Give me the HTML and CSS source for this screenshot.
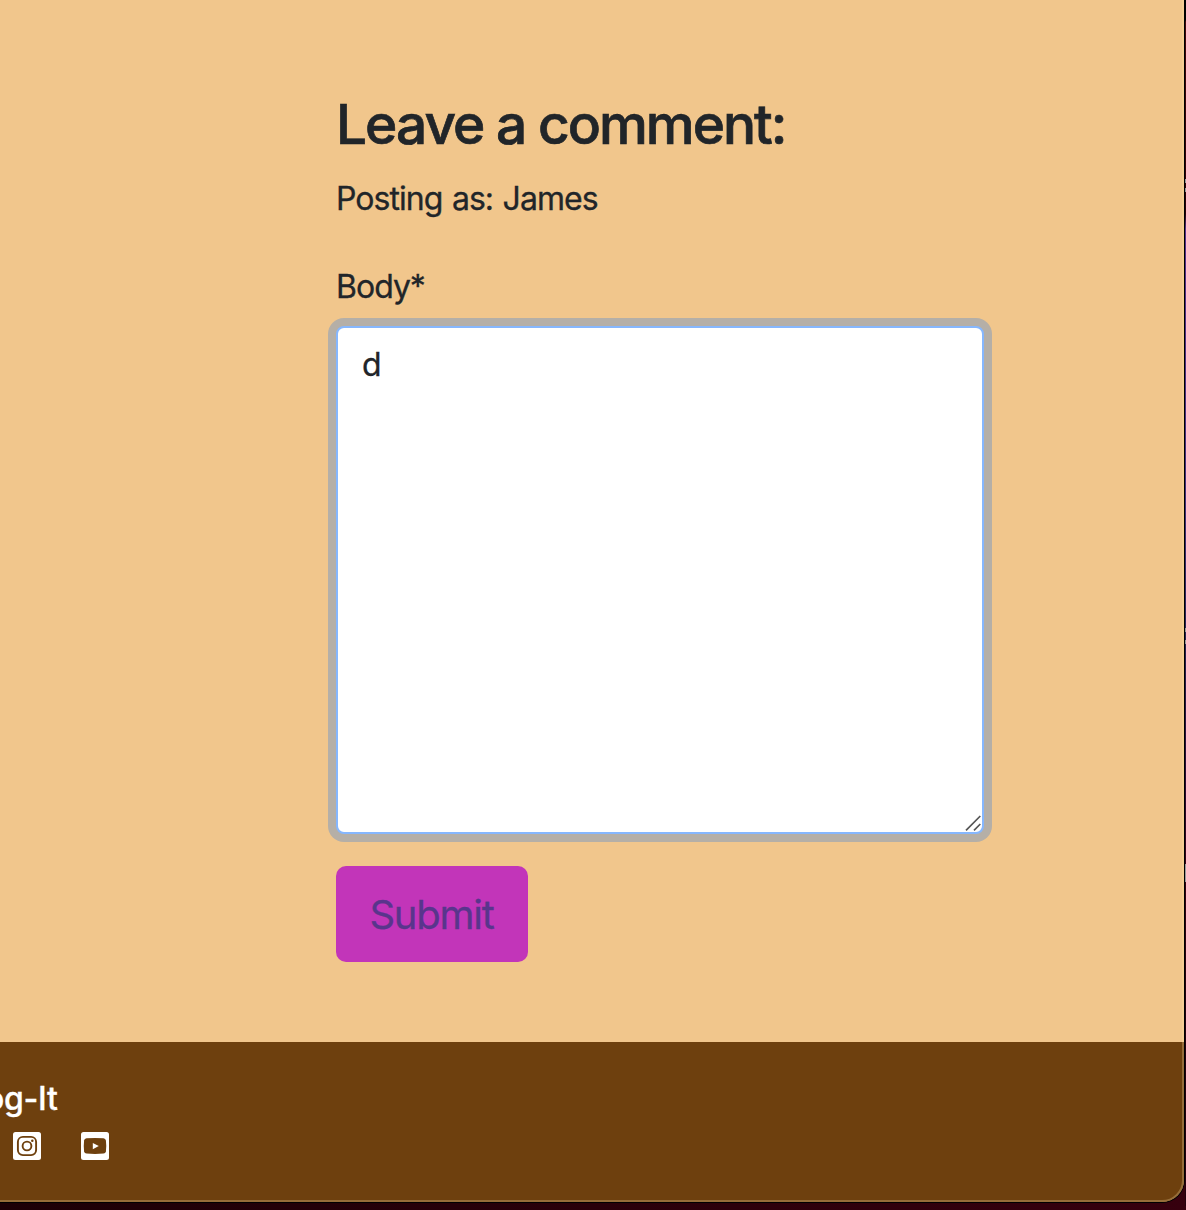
FILE: index.html
```html
<!DOCTYPE html>
<html lang="en">
<head>
<meta charset="utf-8">
<title>Blog-It</title>
<link rel="stylesheet" href="styles.css">
</head>
<body>
<div class="window">
  <main class="comments">
    <h3 class="heading">Leave a comment:</h3>
    <p class="author">Posting as: James</p>
    <form class="comment-form">
      <label class="label" for="body">Body*</label>
      <div class="field">
        <textarea class="textarea" id="body">d</textarea>
        <svg class="grip" viewBox="0 0 16 16" fill="none" stroke="#555" stroke-width="1.7"><path d="M1 15.300 15.300 1M9 15.300 15.300 9"/></svg>
      </div>
      <button class="submit" type="button">Submit</button>
    </form>
  </main>
  <footer class="footer">
    <div class="brand">Blog-It</div>
    <div class="social">
      <svg class="icon" viewBox="0 0 28 28"><rect width="28" height="28" rx="2.500" fill="#fff"/><g fill="none" stroke="#6e400e" stroke-width="1.9"><rect x="4.900" y="4.900" width="18.200" height="18.200" rx="5"/><circle cx="14" cy="14" r="4.400"/></g><circle cx="19.300" cy="8.700" r="1.250" fill="#6e400e"/></svg>
      <svg class="icon" viewBox="0 0 28 28"><rect width="28" height="28" rx="2.500" fill="#fff"/><path d="M5.500 6.300Q14 5.700 22.500 6.300 24.600 6.500 24.900 8.500 25.600 14 24.900 19.500 24.600 21.300 22.500 21.600 14 22.200 5.500 21.600 3.400 21.300 3.100 19.500 2.400 14 3.100 8.500 3.400 6.500 5.500 6.300Z" fill="#6e400e"/><path d="M11.800 10.900 17.800 14 11.800 17.300Z" fill="#fff"/></svg>
    </div>
  </footer>
</div>
<i class="speck speck-a"></i><i class="speck speck-b"></i><i class="speck speck-c"></i><i class="speck speck-d"></i><i class="speck speck-e"></i>
</body>
</html>
```
FILE: styles.css
```css
* { box-sizing: border-box; }
body {
  margin: 0;
  height: 1210px;
  overflow: hidden;
  position: relative;
  font-family: Inter, "Liberation Sans", sans-serif;
  font-size: 32px;
  line-height: 48px;
  color: #212529;
  -webkit-text-stroke: .3px currentColor;
  background:
    linear-gradient(#000 16px, #400508 18px, #300004 180px, #250006 210px, #55308a 225px, #40307a 500px, #252050 640px, #2a0830 780px, #350010 870px, #20000a 1000px, #24000c) right / 1px 1202px no-repeat,
    linear-gradient(#000, #000) 0 0 / 1186px 1180px no-repeat,
    linear-gradient(90deg, #1c0006, #36000e);
}
.window {
  width: 1184px;
  height: 1202px;
  display: flex;
  flex-direction: column;
  position: relative;
  overflow: hidden;
  border-radius: 0 0 22px 0;
  background: #f1c68c;
  box-shadow: 0 0 0 1px #000;
}
.window::after {
  content: "";
  position: absolute;
  inset: -2px 0 0 -2px;
  border: 2px solid rgba(255, 225, 170, .28);
  border-radius: 0 0 22px 0;
}
.comments { height: 1042px; padding: 91px 200px 0 336px; }
.heading { margin: 0 0 17px; font-size: 55px; line-height: 67px; font-weight: 500; letter-spacing: -1.98px; -webkit-text-stroke: .7px currentColor; white-space: nowrap; }
.author { margin: 0 0 40px; letter-spacing: -.95px; word-spacing: 1.4px; }
.comment-form { display: flex; flex-direction: column; align-items: flex-start; }
.label { margin-bottom: 15px; letter-spacing: -1px; }
.field { position: relative; width: 648px; height: 508px; margin-bottom: 32px; }
.textarea {
  display: block;
  width: 100%;
  height: 100%;
  padding: 13px 24px;
  border: 2px solid #86b7fe;
  border-radius: 8px;
  outline: none;
  resize: none;
  background: #fff;
  box-shadow: 0 0 0 8px #b5afa7;
  font: inherit;
  color: inherit;
}
.grip { position: absolute; right: 3.5px; bottom: 3px; width: 16px; height: 16px; }
.submit {
  width: 192px;
  height: 96px;
  padding: 2px 1px 0 0;
  border: 0;
  border-radius: 10px;
  background: #c235b9;
  color: #59358c;
  font: 40px/60px Inter, "Liberation Sans", sans-serif;
  letter-spacing: -1.25px;
}
.footer { flex: 1; padding: 33px 0 0; background: #6e400e; color: #fff; }
.brand { width: 116px; margin-left: -58.5px; height: 48px; display: flex; justify-content: flex-end; font-weight: 500; letter-spacing: -.3px; white-space: nowrap; }
.social { display: flex; gap: 40px; padding: 9px 0 0 12.5px; }
.icon { width: 28px; height: 28px; }
.speck { position: absolute; left: 1185px; width: 1px; height: 4px; background: #999; }
.speck-a { top: 179px; }
.speck-b { top: 188px; }
.speck-c { top: 628px; }
.speck-d { top: 640px; }
.speck-e { top: 864px; height: 18px; }
```
